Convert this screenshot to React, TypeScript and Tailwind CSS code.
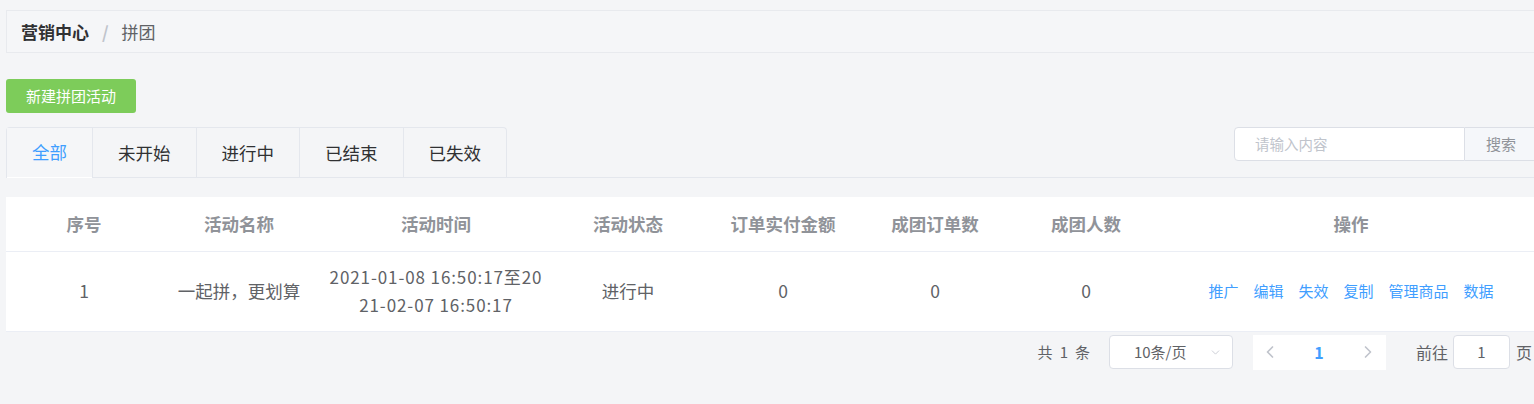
import { ChevronDown, ChevronLeft, ChevronRight } from 'lucide-react';

const tabs = ['全部', '未开始', '进行中', '已结束', '已失效'];

const columns = [
  { title: '序号', w: 'w-[156px]' },
  { title: '活动名称', w: 'w-[154px]' },
  { title: '活动时间', w: 'w-[240px]' },
  { title: '活动状态', w: 'w-[144px]' },
  { title: '订单实付金额', w: 'w-[166px]' },
  { title: '成团订单数', w: 'w-[138px]' },
  { title: '成团人数', w: 'w-[164px]' },
  { title: '操作', w: 'w-[366px]' },
];

const actions = ['推广', '编辑', '失效', '复制', '管理商品', '数据'];

export default function App() {
  return (
    <div
      className="w-full min-h-[404px] overflow-hidden bg-[#f4f5f7] pl-[6px] pt-[10px] text-[#606266]"
      style={{ fontFamily: '"Noto Sans CJK SC", "Noto Sans", sans-serif' }}
    >
      {/* breadcrumb */}
      <div className="flex h-[43px] items-center border-y border-l border-[#e8eaee] bg-[#f5f6f8] pl-[14px] text-[17px]">
        <span className="font-bold text-[#303133]">营销中心</span>
        <span className="mx-[13px] font-bold text-[#c0c4cc]">/</span>
        <span className="text-[#606266]">拼团</span>
      </div>

      <button className="mt-[26px] h-[34px] rounded-[3px] bg-[#7dcc5a] px-[20px] text-[15px] text-white">
        新建拼团活动
      </button>

      {/* tabs + search */}
      <div className="mt-[14px] flex h-[51px] items-start border-b border-[#e4e7ed]">
        <div className="flex h-[51px] rounded-t-[4px] border-x border-t border-[#e4e7ed]">
          {tabs.map((t, i) => (
            <div
              key={t}
              className={`flex h-[50px] items-center px-[25px] text-[17.5px] ${
                i > 0 ? 'border-l border-[#e4e7ed]' : ''
              } ${i === 0 ? 'border-b border-b-white text-[#409eff] bg-[#f5f6f8]' : 'text-[#303133]'}`}
            >
              {t}
            </div>
          ))}
        </div>
        <div className="ml-auto -mr-[8px] flex h-[34px] shrink-0">
          <div className="flex w-[231px] items-center rounded-l-[4px] border border-[#dcdfe6] bg-white pl-[20px] text-[14.5px] text-[#c0c4cc]">
            请输入内容
          </div>
          <div className="flex w-[77px] items-center border-y border-r border-[#dcdfe6] bg-[#f5f7fa] pl-[21px] text-[15px] text-[#909399]">
            搜索
          </div>
        </div>
      </div>

      {/* table */}
      <div className="mt-[19px] bg-white">
        <table className="table-fixed border-collapse">
          <thead>
            <tr className="h-[54px] border-b border-[#ebeef5]">
              {columns.map((c) => (
                <th key={c.title} className={`${c.w} text-center text-[17.5px] font-bold text-[#909399]`}>
                  {c.title}
                </th>
              ))}
            </tr>
          </thead>
          <tbody>
            <tr className="h-[80px] border-b border-[#ebeef5] text-center text-[17.5px] text-[#606266]">
              <td>1</td>
              <td>一起拼，更划算</td>
              <td className="text-[17px] leading-[28px] tracking-[0.9px]">
                2021-01-08 16:50:17至20
                <br />
                21-02-07 16:50:17
              </td>
              <td>进行中</td>
              <td>0</td>
              <td>0</td>
              <td>0</td>
              <td>
                <div className="flex justify-center gap-[15px] text-[15px] text-[#409eff]">
                  {actions.map((a) => (
                    <span key={a}>{a}</span>
                  ))}
                </div>
              </td>
            </tr>
          </tbody>
        </table>
      </div>

      {/* pagination */}
      <div className="mt-[3px] flex items-center justify-end pr-[2px] text-[15px] text-[#606266]">
        <div className="mr-[19px] flex gap-[7px]">
          <span>共</span>
          <span>1</span>
          <span>条</span>
        </div>
        <div className="flex h-[34px] w-[124px] items-center rounded-[4px] border border-[#dcdfe6] bg-white pl-[24px] pr-[10px]">
          <span>10条/页</span>
          <ChevronDown className="ml-auto h-[13px] w-[13px] text-[#c0c4cc]" strokeWidth={1.5} />
        </div>
        <div className="ml-[20px] flex h-[35px] items-center bg-white">
          <div className="flex w-[34px] items-center justify-center">
            <ChevronLeft className="h-[20px] w-[20px] text-[#c0c4cc]" strokeWidth={2} />
          </div>
          <div className="flex w-[64px] items-center justify-center text-[16px] font-bold text-[#409eff]">1</div>
          <div className="flex w-[35px] items-center justify-center">
            <ChevronRight className="h-[20px] w-[20px] text-[#c0c4cc]" strokeWidth={2} />
          </div>
        </div>
        <span className="ml-[30px] text-[16px]">前往</span>
        <div className="ml-[5px] mr-[6px] flex h-[34px] w-[57px] items-center justify-center rounded-[4px] border border-[#dcdfe6] bg-white">
          1
        </div>
        <span className="text-[16px]">页</span>
      </div>
    </div>
  );
}
